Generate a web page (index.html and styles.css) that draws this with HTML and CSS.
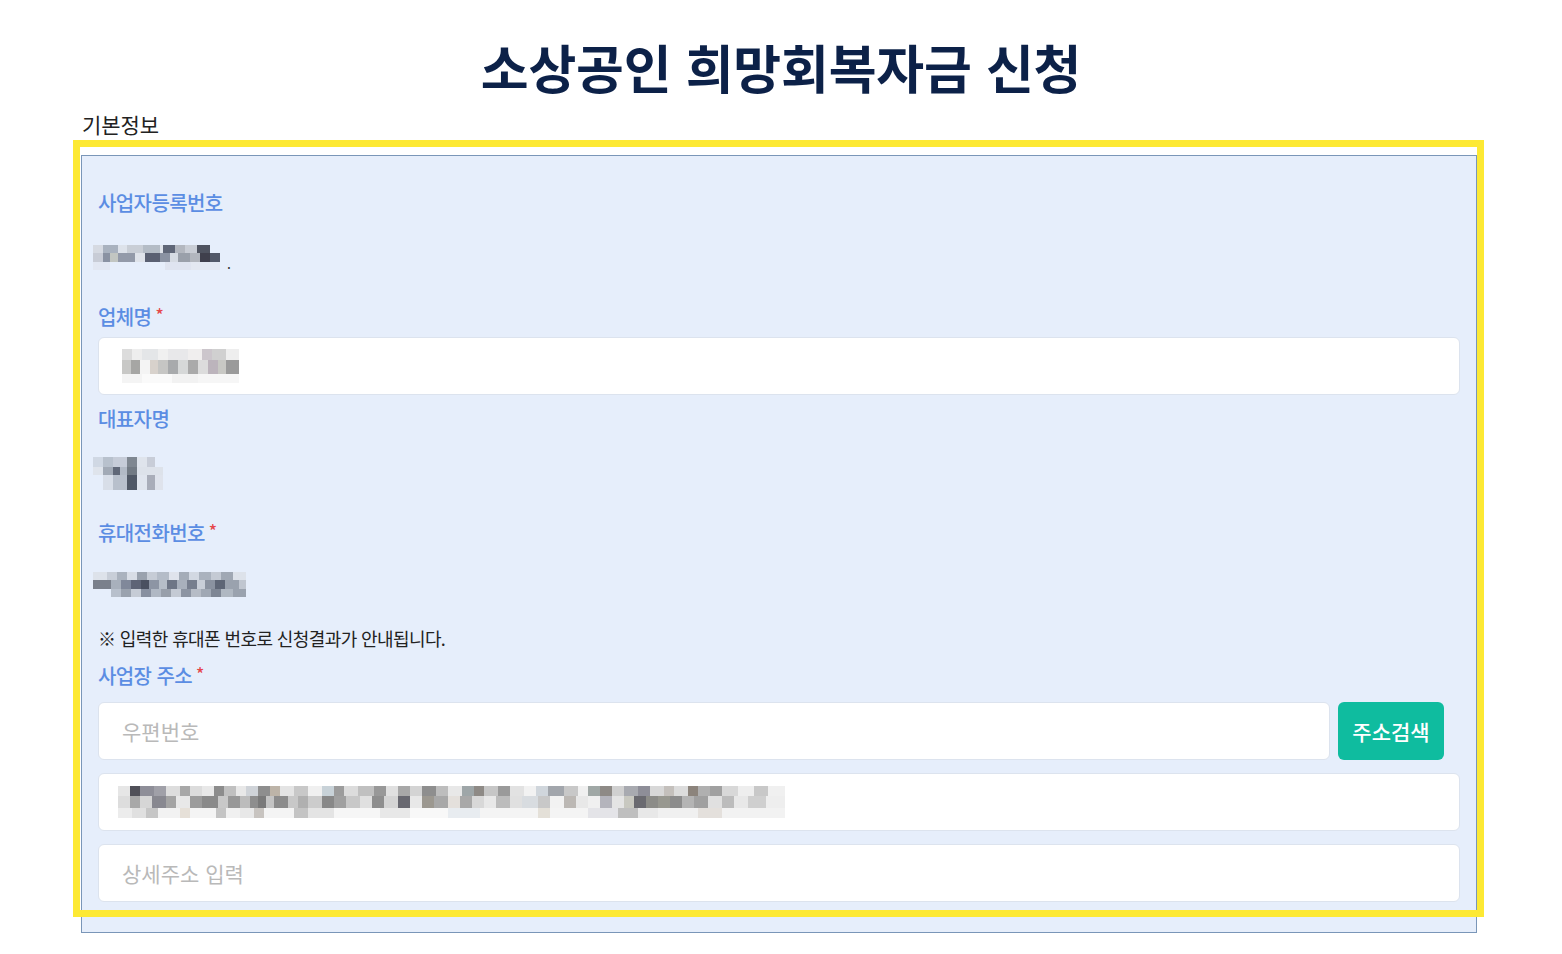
FILE: index.html
```html
<!DOCTYPE html>
<html lang="ko">
<head>
<meta charset="utf-8">
<title>소상공인 희망회복자금 신청</title>
<link rel="stylesheet" href="styles.css">
</head>
<body>
<h1 class="page-title">소상공인 희망회복자금 신청</h1>
<section class="section">
  <h2 class="section-title">기본정보</h2>
  <div class="panel">
    <div class="highlight"></div>

    <div class="field-label first">사업자등록번호</div>
    <div class="value-row v-biz"><span class="mosaic m-biz"></span><span class="dot">.</span></div>

    <div class="field-label gap-a">업체명<span class="req">*</span></div>
    <div class="input input-a"><span class="mosaic m-company"></span></div>

    <div class="field-label gap-b">대표자명</div>
    <div class="value-row v-rep"><span class="mosaic m-rep"></span></div>

    <div class="field-label gap-c">휴대전화번호<span class="req">*</span></div>
    <div class="value-row v-phone"><span class="mosaic m-phone"></span></div>

    <p class="note">※ 입력한 휴대폰 번호로 신청결과가 안내됩니다.</p>

    <div class="field-label gap-d">사업장 주소<span class="req">*</span></div>
    <div class="zip-row">
      <div class="input grow"><span class="placeholder">우편번호</span></div>
      <button class="search-btn" type="button">주소검색</button>
    </div>
    <div class="input input-addr"><span class="mosaic m-addr"></span></div>
    <div class="input input-detail"><span class="placeholder">상세주소 입력</span></div>
  </div>
</section>
</body>
</html>
```

FILE: styles.css
```css
* { box-sizing: border-box; }

body {
  margin: 0;
  background: #ffffff;
  font-family: "Noto Sans CJK KR", "Noto Sans", sans-serif;
  color: #222;
}

.page-title {
  margin: 36px 0 0;
  text-align: center;
  font-size: 52px;
  line-height: 62px;
  font-weight: 700;
  color: #0c2148;
  letter-spacing: -0.2px;
}

.section {
  margin: 14px 0 0 81px;
  width: 1396px;
}

.section-title {
  margin: 0 0 19px 1px;
  font-size: 21px;
  line-height: 24px;
  font-weight: 400;
  color: #222;
  letter-spacing: -0.1px;
}

.panel {
  position: relative;
  background: #e6eefb;
  border: 1px solid #7a96b8;
  padding: 33px 16px 30px;
}

.highlight {
  position: absolute;
  left: -9px;
  top: -16px;
  right: -8px;
  bottom: 15px;
  border: 7px solid #fde934;
  pointer-events: none;
}

.field-label {
  height: 28px;
  line-height: 28px;
  font-size: 20px;
  font-weight: 500;
  color: #5b8de3;
  letter-spacing: -0.6px;
}

.req {
  color: #e5474a;
  font-size: 17px;
  margin-left: 4px;
  position: relative;
  top: -3px;
}

.gap-a { margin-top: 33px; }
.gap-b { margin-top: 10px; }
.gap-c { margin-top: 29px; }
.gap-d { margin-top: 11px; }

.value-row {
  display: flex;
  align-items: flex-end;
  margin-left: -5px;
}
.v-biz { margin-top: 28px; height: 25px; }
.v-rep { margin-top: 24px; height: 33px; }
.v-phone { margin-top: 25px; height: 25px; }

.dot {
  font-size: 14px;
  line-height: 14px;
  margin-left: 7px;
  color: #333;
}

.note {
  margin: 28px 0 0;
  height: 26px;
  line-height: 26px;
  font-size: 18px;
  letter-spacing: -0.6px;
  color: #222;
}

.input {
  height: 58px;
  background: #fff;
  border: 1px solid #dce3ee;
  border-radius: 6px;
  display: flex;
  align-items: center;
  padding-left: 23px;
}
.input-a { margin-top: 6px; }
.input-addr { margin-top: 13px; padding-left: 19px; }
.input-detail { margin-top: 13px; }

.placeholder {
  font-size: 21px;
  color: #b9b9b9;
  letter-spacing: 0;
}

.zip-row {
  display: flex;
  gap: 8px;
  margin-top: 12px;
  padding-right: 16px;
}
.grow { flex: 1; height: 58px; }

.search-btn {
  width: 106px;
  height: 58px;
  border: none;
  border-radius: 6px;
  background: #0fbc9f;
  color: #fff;
  font-family: inherit;
  font-size: 21px;
  font-weight: 500;
  letter-spacing: 0;
  padding: 0;
}

.mosaic { display: block; background-repeat: no-repeat; }

.m-biz {
  width: 127px;
  height: 25px;
  background-image:
    linear-gradient(90deg, #d6dae2 0 10px, #a9b2bf 10px 25px, #dde2ea 25px 34px, #c9ced6 34px 50px, #b4bcc6 50px 67px, #dfe3ea 67px 70px, #5f6677 70px 82px, #b3b7bf 82px 92px, #c9cdd5 92px 104px, #4f5360 104px 117px, transparent 117px),
    linear-gradient(90deg, #c8ccd6 0 10px, #8a92a2 10px 17px, #c2c6c2 17px 25px, #939aa9 25px 42px, #dfe3ea 42px 52px, #5a6072 52px 67px, #8a92a2 67px 77px, #d6dbe3 77px 85px, #9aa0aa 85px 97px, #b2b6be 97px 107px, #3f3f4c 107px 117px, #525868 117px 127px),
    linear-gradient(90deg, #e2e7f2 0 17px, transparent 17px 72px, #dfe4f0 72px 98px, #e3e8f2 98px 127px);
  background-size: 100% 8px, 100% 9px, 100% 8px;
  background-position: 0 0, 0 8px, 0 17px;
}

.m-company {
  width: 117px;
  height: 34px;
  background-image:
    linear-gradient(90deg, #dcdcdc 0 10px, #eeeeee 10px 20px, #e4e6e8 20px 36px, #f0f0f0 36px 46px, #e8e8ea 46px 66px, #f0eeee 66px 80px, #ccc6cc 80px 90px, #d0d0d0 90px 104px, #eeeeee 104px 117px),
    linear-gradient(90deg, #c8c8c6 0 9px, #a6a6a4 9px 18px, #f4f4f4 18px 28px, #d8d2cc 28px 36px, #c6c6c4 36px 46px, #a8aaac 46px 56px, #d6d8d8 56px 66px, #aaaaaa 66px 76px, #dcdcdc 76px 86px, #bcb4bc 86px 96px, #c8c8c4 96px 104px, #9a9a9a 104px 117px),
    linear-gradient(90deg, #f4f4f4 0 20px, #fafafa 20px 50px, #f2f2f2 50px 76px, #f6f6f6 76px 117px);
  background-size: 100% 11px, 100% 14px, 100% 9px;
  background-position: 0 0, 0 11px, 0 25px;
}

.m-rep {
  width: 70px;
  height: 33px;
  background-image:
    linear-gradient(90deg, #d0d8e4 0 10px, #b8c1cd 10px 20px, #c6ccd8 20px 34px, #7f8791 34px 44px, #dfe4ec 44px 54px, #c8cdd8 54px 62px, transparent 62px),
    linear-gradient(90deg, #dfe4ec 0 10px, #a2aab6 10px 20px, #606878 20px 27px, #b2bac6 27px 34px, #727a84 34px 44px, #dde2ea 44px 70px),
    linear-gradient(90deg, transparent 0 10px, #d8dee8 10px 20px, #b8c0cc 20px 34px, #505866 34px 44px, #e0e5ee 44px 54px, #a9adb9 54px 62px, #dfe3ec 62px 70px);
  background-size: 100% 10px, 100% 8px, 100% 15px;
  background-position: 0 0, 0 10px, 0 18px;
}

.m-phone {
  width: 153px;
  height: 25px;
  background-image:
    linear-gradient(90deg, #dde2ea 0 14px, #c8ced8 14px 24px, #aab2be 24px 34px, #d8dde6 34px 44px, #9aa2ae 44px 54px, #c6ccd6 54px 64px, #b4bcc8 64px 76px, #dfe3ec 76px 86px, #a4acb8 86px 96px, #d2d8e2 96px 106px, #aab2be 106px 118px, #c4cad4 118px 128px, #a0a8b4 128px 140px, #dde2ea 140px 153px),
    linear-gradient(90deg, #7a808c 0 18px, #a8b0bc 18px 28px, #80889a 28px 38px, #5e6476 38px 48px, #4a5060 48px 56px, #8d95a4 56px 66px, #b6bec8 66px 74px, #6e7686 74px 84px, #a8b0bc 84px 94px, #767e8e 94px 104px, #c8ced8 104px 112px, #8a92a0 112px 122px, #5e6676 122px 132px, #9aa2ae 132px 146px, #c0c6d0 146px 153px),
    linear-gradient(90deg, transparent 0 18px, #b8c0cc 18px 28px, #9aa2ae 28px 38px, #c6ccd6 38px 48px, #8890a0 48px 58px, #b0b8c4 58px 68px, #989faa 68px 78px, #c4cad4 78px 88px, #8c94a2 88px 98px, #b6bcc6 98px 108px, #a0a8b4 108px 118px, #7e8694 118px 128px, #b0b8c2 128px 140px, #9aa2ae 140px 153px);
  background-size: 100% 8px, 100% 9px, 100% 8px;
  background-position: 0 0, 0 8px, 0 17px;
}

.m-addr {
  width: 667px;
  height: 32px;
  background-image:
    linear-gradient(90deg, #e6e6e6 0 12px, #505058 12px 22px, #8e8e98 22px 36px, #a0a0a8 36px 48px, #dddddd 48px 62px, #a8a8a8 62px 72px, #dcdcdc 72px 84px, #e8e8e8 84px 96px, #8c8c8c 96px 106px, #c0c0c0 106px 118px, #e8e8e8 118px 128px, #cfd3d8 128px 140px, #8e8e8e 140px 152px, #bdb4a8 152px 162px, #e4e4e4 162px 176px, #c8c8c8 176px 190px, #f0f0f0 190px 204px, #c8d2d8 204px 216px, #9c9c9c 216px 226px, #dcdcdc 226px 240px, #c0c0c0 240px 256px, #989898 256px 268px, #e0e0e0 268px 280px, #a8a8a8 280px 292px, #d4d4d4 292px 304px, #8e8e8e 304px 318px, #bdbdbd 318px 330px, #e8e8e8 330px 344px, #9ea6a8 344px 356px, #8e8a86 356px 366px, #c6c6c6 366px 380px, #9a9a9a 380px 392px, #e2e2e2 392px 406px, #f2f2f2 406px 418px, #d0d6dc 418px 430px, #a2a6ac 430px 446px, #c8c8c8 446px 460px, #f0f0f0 460px 470px, #a0a8a6 470px 482px, #8e8a86 482px 494px, #d0d0d0 494px 506px, #a8aab0 506px 520px, #8e8e98 520px 532px, #d8d8d8 532px 546px, #c4c0bc 546px 556px, #dcdcdc 556px 570px, #8c847c 570px 580px, #b0b0b0 580px 592px, #a0a0a0 592px 604px, #d8d8d8 604px 620px, #eeeeee 620px 636px, #c8c8c8 636px 650px, #f0f0f0 650px 667px),
    linear-gradient(90deg, #dddddd 0 12px, #a8a8a8 12px 22px, #d6d6d6 22px 34px, #888890 34px 48px, #a4a4a4 48px 58px, #e8e8e8 58px 72px, #9c9c9c 72px 84px, #8a8a8a 84px 100px, #c8c8c8 100px 110px, #989898 110px 122px, #bcbcbc 122px 132px, #8e8e8e 132px 140px, #7a7a7a 140px 148px, #c4c4c4 148px 156px, #8c8c8c 156px 170px, #c8c8c8 170px 180px, #b0b0b0 180px 190px, #cccccc 190px 204px, #888888 204px 216px, #a0a0a0 216px 228px, #c8c8c8 228px 242px, #e0e0e0 242px 254px, #8e8e8e 254px 266px, #d4d4d4 266px 280px, #686870 280px 292px, #e8e8e8 292px 304px, #9c9890 304px 316px, #a8a8a8 316px 330px, #e4e0dc 330px 342px, #a8a8a8 342px 354px, #d8d8d8 354px 366px, #e8e8e8 366px 378px, #bcbcbc 378px 392px, #e0e0e0 392px 404px, #d8dce0 404px 420px, #c8c8c8 420px 432px, #f2f2f2 432px 446px, #bcb8b4 446px 458px, #e8e8e8 458px 470px, #f0f0f0 470px 482px, #b4b4bc 482px 494px, #e4e4e4 494px 506px, #c8c8c0 506px 516px, #6a6a70 516px 528px, #8c8c88 528px 540px, #989890 540px 552px, #8c8c8c 552px 564px, #b4b4b4 564px 576px, #a0a0a0 576px 590px, #e0e0e0 590px 604px, #bcbcbc 604px 616px, #e8e8e8 616px 630px, #cfcfcf 630px 648px, #eeeeee 648px 667px),
    linear-gradient(90deg, #ececec 0 14px, #e0e0e0 14px 28px, #c6c6c6 28px 40px, #f2f2f2 40px 62px, #e6e0d8 62px 72px, #f4f4f4 72px 98px, #c4c4c4 98px 108px, #f0f0f0 108px 122px, #e8e8e8 122px 136px, #c8c4c0 136px 146px, #f4f4f4 146px 176px, #c4c4c4 176px 190px, #e4e4e4 190px 216px, #f6f6f6 216px 262px, #e8e8e8 262px 292px, #f8f8f8 292px 330px, #e8ecf0 330px 362px, #f4f4f4 362px 420px, #e4e0d8 420px 432px, #f4f4f4 432px 470px, #e4e4e8 470px 500px, #bfbfbf 500px 520px, #e8e8e8 520px 540px, #f0f0f0 540px 580px, #e4e0dc 580px 604px, #f2f2f2 604px 667px);
  background-size: 100% 10px, 100% 12px, 100% 10px;
  background-position: 0 0, 0 10px, 0 22px;
}
```
